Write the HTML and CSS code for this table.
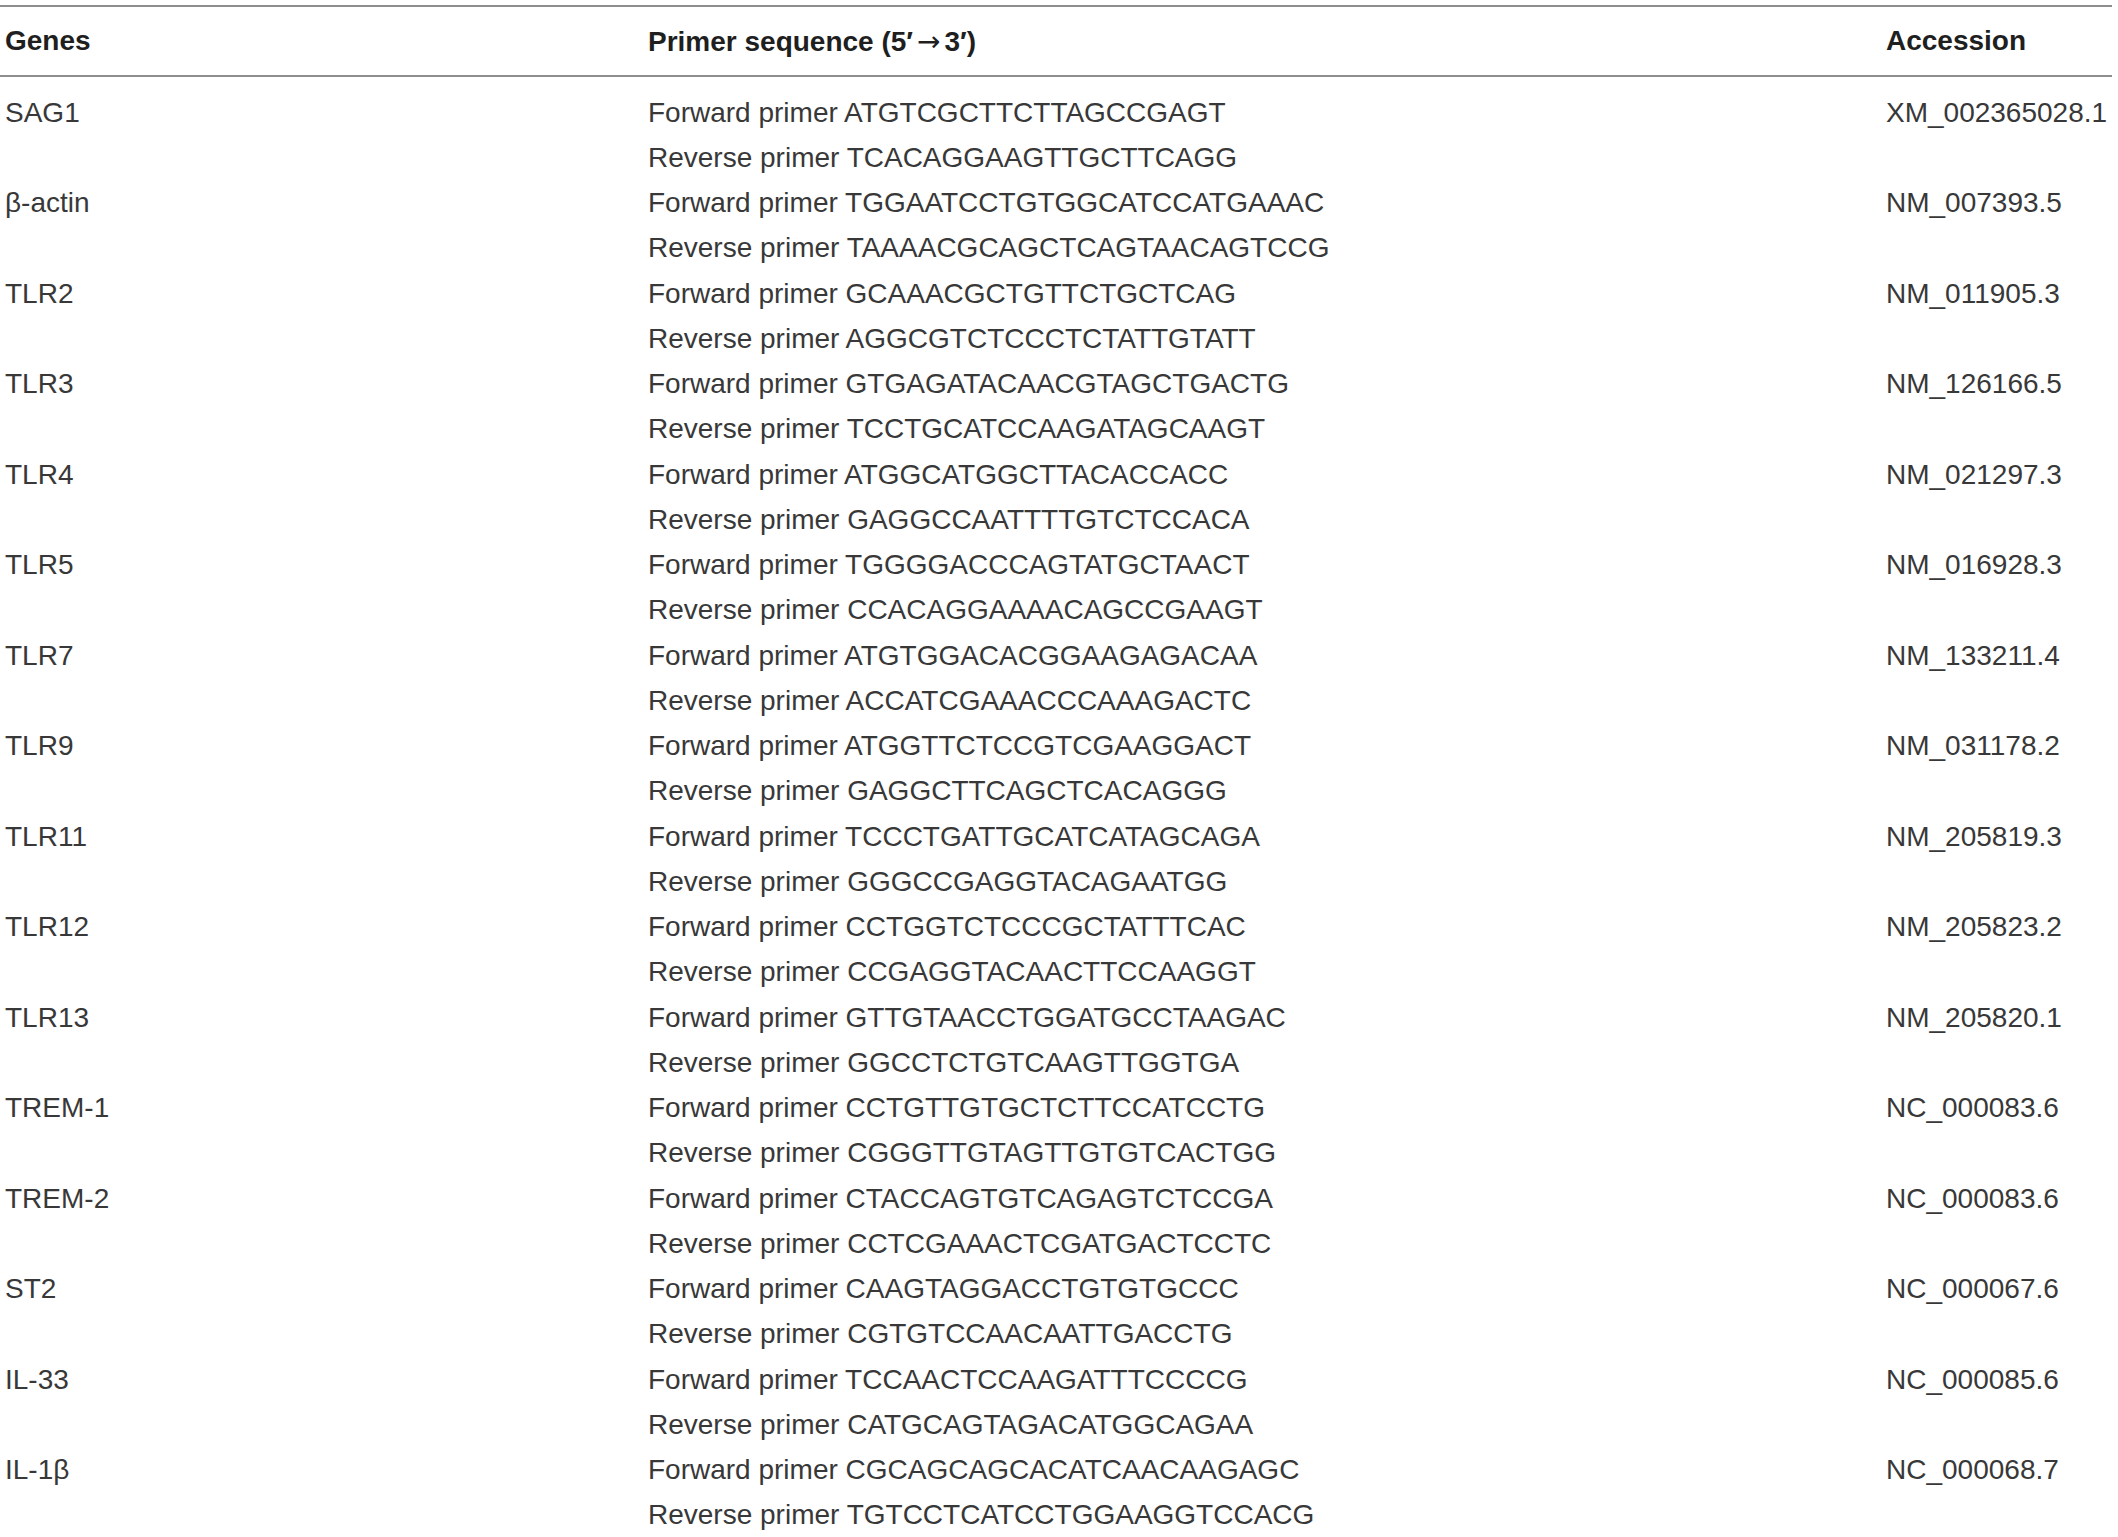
FILE: index.html
```html
<!DOCTYPE html>
<html lang="en">
<head>
<meta charset="utf-8">
<title>Primer sequences</title>
<link rel="stylesheet" href="styles.css">
</head>
<body>
<table class="primers">
  <colgroup>
    <col class="c-gene">
    <col class="c-seq">
    <col class="c-acc">
  </colgroup>
  <thead>
    <tr>
      <th>Genes</th>
      <th>Primer sequence (5′<span class="arrow">→</span>3′)</th>
      <th>Accession</th>
    </tr>
  </thead>
  <tbody>
    <tr class="first"><td>SAG1</td><td>Forward primer ATGTCGCTTCTTAGCCGAGT</td><td>XM_002365028.1</td></tr>
    <tr><td></td><td>Reverse primer TCACAGGAAGTTGCTTCAGG</td><td></td></tr>
    <tr><td>β-actin</td><td>Forward primer TGGAATCCTGTGGCATCCATGAAAC</td><td>NM_007393.5</td></tr>
    <tr><td></td><td>Reverse primer TAAAACGCAGCTCAGTAACAGTCCG</td><td></td></tr>
    <tr><td>TLR2</td><td>Forward primer GCAAACGCTGTTCTGCTCAG</td><td>NM_011905.3</td></tr>
    <tr><td></td><td>Reverse primer AGGCGTCTCCCTCTATTGTATT</td><td></td></tr>
    <tr><td>TLR3</td><td>Forward primer GTGAGATACAACGTAGCTGACTG</td><td>NM_126166.5</td></tr>
    <tr><td></td><td>Reverse primer TCCTGCATCCAAGATAGCAAGT</td><td></td></tr>
    <tr><td>TLR4</td><td>Forward primer ATGGCATGGCTTACACCACC</td><td>NM_021297.3</td></tr>
    <tr><td></td><td>Reverse primer GAGGCCAATTTTGTCTCCACA</td><td></td></tr>
    <tr><td>TLR5</td><td>Forward primer TGGGGACCCAGTATGCTAACT</td><td>NM_016928.3</td></tr>
    <tr><td></td><td>Reverse primer CCACAGGAAAACAGCCGAAGT</td><td></td></tr>
    <tr><td>TLR7</td><td>Forward primer ATGTGGACACGGAAGAGACAA</td><td>NM_133211.4</td></tr>
    <tr><td></td><td>Reverse primer ACCATCGAAACCCAAAGACTC</td><td></td></tr>
    <tr><td>TLR9</td><td>Forward primer ATGGTTCTCCGTCGAAGGACT</td><td>NM_031178.2</td></tr>
    <tr><td></td><td>Reverse primer GAGGCTTCAGCTCACAGGG</td><td></td></tr>
    <tr><td>TLR11</td><td>Forward primer TCCCTGATTGCATCATAGCAGA</td><td>NM_205819.3</td></tr>
    <tr><td></td><td>Reverse primer GGGCCGAGGTACAGAATGG</td><td></td></tr>
    <tr><td>TLR12</td><td>Forward primer CCTGGTCTCCCGCTATTTCAC</td><td>NM_205823.2</td></tr>
    <tr><td></td><td>Reverse primer CCGAGGTACAACTTCCAAGGT</td><td></td></tr>
    <tr><td>TLR13</td><td>Forward primer GTTGTAACCTGGATGCCTAAGAC</td><td>NM_205820.1</td></tr>
    <tr><td></td><td>Reverse primer GGCCTCTGTCAAGTTGGTGA</td><td></td></tr>
    <tr><td>TREM-1</td><td>Forward primer CCTGTTGTGCTCTTCCATCCTG</td><td>NC_000083.6</td></tr>
    <tr><td></td><td>Reverse primer CGGGTTGTAGTTGTGTCACTGG</td><td></td></tr>
    <tr><td>TREM-2</td><td>Forward primer CTACCAGTGTCAGAGTCTCCGA</td><td>NC_000083.6</td></tr>
    <tr><td></td><td>Reverse primer CCTCGAAACTCGATGACTCCTC</td><td></td></tr>
    <tr><td>ST2</td><td>Forward primer CAAGTAGGACCTGTGTGCCC</td><td>NC_000067.6</td></tr>
    <tr><td></td><td>Reverse primer CGTGTCCAACAATTGACCTG</td><td></td></tr>
    <tr><td>IL-33</td><td>Forward primer TCCAACTCCAAGATTTCCCCG</td><td>NC_000085.6</td></tr>
    <tr><td></td><td>Reverse primer CATGCAGTAGACATGGCAGAA</td><td></td></tr>
    <tr><td>IL-1β</td><td>Forward primer CGCAGCAGCACATCAACAAGAGC</td><td>NC_000068.7</td></tr>
    <tr><td></td><td>Reverse primer TGTCCTCATCCTGGAAGGTCCACG</td><td></td></tr>
  </tbody>
</table>
</body>
</html>
```

FILE: styles.css
```css
html, body {
  margin: 0;
  padding: 0;
  background: #ffffff;
}

body {
  padding-top: 5px;
  font-family: "Liberation Sans", Arial, "DejaVu Sans", sans-serif;
  color: #383838;
}

.primers {
  width: 2112px;
  border-collapse: collapse;
  table-layout: fixed;
  font-size: 28px;
}

.c-gene { width: 643px; }
.c-seq { width: 1238px; }
.c-acc { width: 231px; }

.primers thead tr {
  border-top: 2px solid #8e8e8e;
  border-bottom: 2px solid #8e8e8e;
}

.primers th {
  height: 68px;
  padding: 0 0 0 5px;
  text-align: left;
  vertical-align: middle;
  font-weight: 700;
  color: #1f1f1f;
  white-space: nowrap;
}

.arrow {
  font-family: "DejaVu Sans", sans-serif;
  font-weight: 400;
  font-size: 28px;
  margin: 0 4px;
}

.primers td {
  height: 45.25px;
  padding: 0 0 0 5px;
  vertical-align: middle;
  white-space: nowrap;
  line-height: 1;
}

.primers tr.first td {
  padding-top: 13px;
  height: 45.25px;
  box-sizing: content-box;
}
```
